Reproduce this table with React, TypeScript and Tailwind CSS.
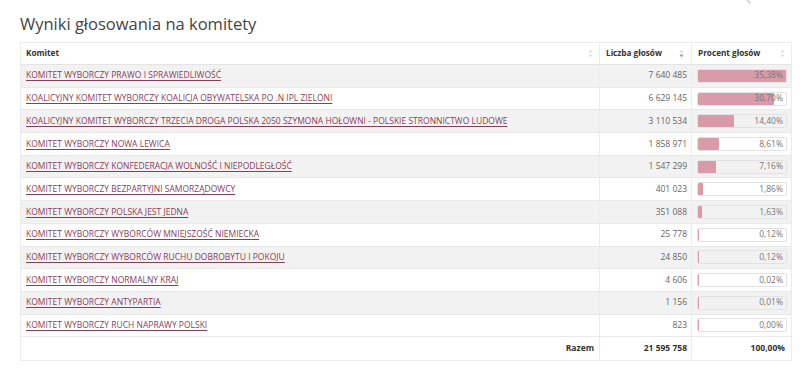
import React from 'react'

interface Row {
  name: string
  votes: string
  pct: number
}

const rows: Row[] = [
  { name: 'KOMITET WYBORCZY PRAWO I SPRAWIEDLIWOŚĆ', votes: '7 640 485', pct: 35.38 },
  { name: 'KOALICYJNY KOMITET WYBORCZY KOALICJA OBYWATELSKA PO .N IPL ZIELONI', votes: '6 629 145', pct: 30.7 },
  { name: 'KOALICYJNY KOMITET WYBORCZY TRZECIA DROGA POLSKA 2050 SZYMONA HOŁOWNI - POLSKIE STRONNICTWO LUDOWE', votes: '3 110 534', pct: 14.4 },
  { name: 'KOMITET WYBORCZY NOWA LEWICA', votes: '1 858 971', pct: 8.61 },
  { name: 'KOMITET WYBORCZY KONFEDERACJA WOLNOŚĆ I NIEPODLEGŁOŚĆ', votes: '1 547 299', pct: 7.16 },
  { name: 'KOMITET WYBORCZY BEZPARTYJNI SAMORZĄDOWCY', votes: '401 023', pct: 1.86 },
  { name: 'KOMITET WYBORCZY POLSKA JEST JEDNA', votes: '351 088', pct: 1.63 },
  { name: 'KOMITET WYBORCZY WYBORCÓW MNIEJSZOŚĆ NIEMIECKA', votes: '25 778', pct: 0.12 },
  { name: 'KOMITET WYBORCZY WYBORCÓW RUCHU DOBROBYTU I POKOJU', votes: '24 850', pct: 0.12 },
  { name: 'KOMITET WYBORCZY NORMALNY KRAJ', votes: '4 606', pct: 0.02 },
  { name: 'KOMITET WYBORCZY ANTYPARTIA', votes: '1 156', pct: 0.01 },
  { name: 'KOMITET WYBORCZY RUCH NAPRAWY POLSKI', votes: '823', pct: 0.0 },
]

const MAX = 35.38

function SortIcon({ active }: { active?: boolean }) {
  return (
    <svg width="5" height="9" viewBox="0 0 5 9" className="shrink-0">
      <path d="M2.5 0.5 L4.5 3.5 L0.5 3.5 Z" fill="#dedede" />
      <path d="M0.5 5.5 L4.5 5.5 L2.5 8.5 Z" fill={active ? '#9a9a9a' : '#dedede'} />
    </svg>
  )
}

function fmt(p: number) {
  return p.toFixed(2).replace('.', ',') + '%'
}

export default function App() {
  return (
    <div className="relative w-[800px] h-[374px] overflow-hidden bg-white font-['Open_Sans',sans-serif] text-[#333]">
      {/* cut-off search icon at the top */}
      <svg className="absolute left-[746px] top-0" width="8" height="5" viewBox="0 0 8 5">
        <path d="M1 0 L4 3" stroke="#c8c8c8" strokeWidth="1.4" strokeLinecap="round" />
      </svg>

      <h1 className="pl-[20px] pt-[12px] text-[16.5px] leading-[24px] font-normal text-[#444]">
        Wyniki głosowania na komitety
      </h1>

      <div className="ml-[20px] mt-[6px] w-[772px] border border-[#ececec]">
        {/* header */}
        <div className="grid grid-cols-[579px_92px_99px] h-[22px] border-b border-[#e4e4e4] text-[8.2px] font-bold text-[#333]">
          <div className="flex items-center justify-between pl-[5px] pr-[6px] border-r border-[#ececec]">
            <span>Komitet</span>
            <SortIcon />
          </div>
          <div className="flex items-center justify-between pl-[6px] pr-[7px] border-r border-[#ececec]">
            <span>Liczba głosów</span>
            <SortIcon active />
          </div>
          <div className="flex items-center justify-between pl-[6px] pr-[6px]">
            <span>Procent głosów</span>
            <SortIcon />
          </div>
        </div>

        {/* rows */}
        {rows.map((r, i) => (
          <div
            key={r.name}
            className={`grid grid-cols-[579px_92px_99px] h-[22.7px] border-b border-[#e9e9e9] text-[8.5px] ${
              i % 2 === 0 ? 'bg-[#f2f2f2]' : 'bg-white'
            }`}
          >
            <div className="flex items-center pl-[5px] border-r border-[#ececec]">
              <a href="#" className="text-[#8c3d58] underline decoration-[#8c3d58] underline-offset-[1.5px] whitespace-nowrap">
                {r.name}
              </a>
            </div>
            <div className="flex items-center justify-end pr-[4px] text-[#666] border-r border-[#ececec]">
              {r.votes}
            </div>
            <div className="flex items-center pl-[5px] pr-[4px]">
              <div className="relative w-full h-[14px] rounded-[2px] border border-[#e2e2e2] overflow-hidden">
                <div
                  className="absolute left-0 top-0 bottom-0 bg-[#d99aaa] rounded-[1px]"
                  style={{ width: `${(r.pct / MAX) * 100}%`, minWidth: '1px' }}
                />
                <span className="absolute right-[3px] top-0 bottom-0 flex items-center text-[#777]">
                  {fmt(r.pct)}
                </span>
              </div>
            </div>
          </div>
        ))}

        {/* footer */}
        <div className="grid grid-cols-[579px_92px_99px] h-[22.7px] text-[8.5px] font-bold text-[#333]">
          <div className="flex items-center justify-end pr-[5px] border-r border-[#ececec]">Razem</div>
          <div className="flex items-center justify-end pr-[4px] border-r border-[#ececec]">21 595 758</div>
          <div className="flex items-center justify-end pr-[6px]">100,00%</div>
        </div>
      </div>
    </div>
  )
}
